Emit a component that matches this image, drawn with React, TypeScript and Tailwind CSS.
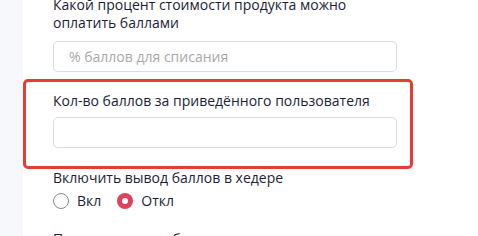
import { useState } from "react";

export default function App() {
    const [showInHeader, setShowInHeader] = useState<"on" | "off">("off");

    return (
        <div className="flex h-screen overflow-hidden bg-white font-['Open_Sans',sans-serif] text-[14px] leading-[18px] text-[#1d1d35]">
            {/* Left rail */}
            <aside className="w-[23px] shrink-0 bg-[#f7f8fc]" />

            <main className="flex-1">
                <p className="ml-[30px] mt-[-4px] w-[344px]">
                    Какой процент стоимости продукта можно оплатить баллами
                </p>
                <input
                    placeholder="% баллов для списания"
                    className="ml-[30px] mt-[9px] block h-[31px] w-[344px] rounded-[5px] border border-[#dcdcdc] px-[15px] text-[14px] placeholder-[#a8a8a8] outline-none"
                />

                {/* Highlighted field */}
                <div className="mt-[7px] w-[390px] rounded-[5px] border-[3px] border-[#e53d31] px-[27px] pb-[18px] pt-[10px]">
                    <label className="block">Кол-во баллов за приведённого пользователя</label>
                    <input className="mt-[7px] block h-[31px] w-[344px] rounded-[5px] border border-[#dcdcdc] px-[15px] text-[14px] outline-none" />
                </div>

                <p className="ml-[30px]">Включить вывод баллов в хедере</p>
                <div className="ml-[30px] mt-[5px] flex items-center">
                    <button onClick={() => setShowInHeader("on")} className="flex items-center gap-[8px]">
                        {showInHeader === "on" ? (
                            <span className="flex h-4 w-4 items-center justify-center rounded-full bg-[#e0425d]">
                                <span className="h-[6px] w-[6px] rounded-full bg-white" />
                            </span>
                        ) : (
                            <span className="h-4 w-4 rounded-full border border-[#8a8a8a]" />
                        )}
                        Вкл
                    </button>
                    <button onClick={() => setShowInHeader("off")} className="ml-[16px] flex items-center gap-[8px]">
                        {showInHeader === "off" ? (
                            <span className="flex h-4 w-4 items-center justify-center rounded-full bg-[#e0425d]">
                                <span className="h-[6px] w-[6px] rounded-full bg-white" />
                            </span>
                        ) : (
                            <span className="h-4 w-4 rounded-full border border-[#8a8a8a]" />
                        )}
                        Откл
                    </button>
                </div>

                <p className="ml-[30px] mt-[20px]">Приветственные баллы</p>
            </main>
        </div>
    );
}
